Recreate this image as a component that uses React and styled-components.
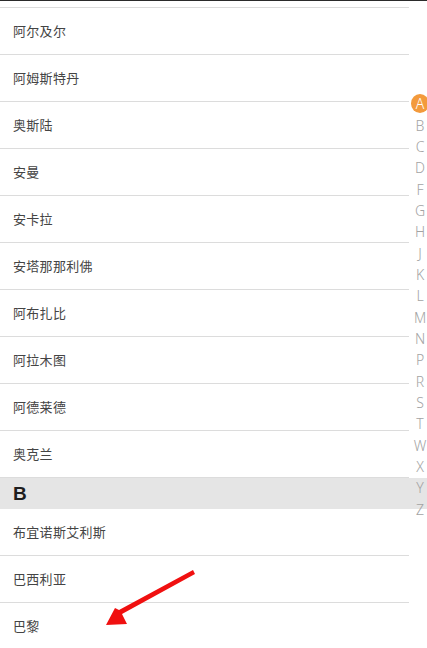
import React from "react";
import styled, { createGlobalStyle } from "styled-components";

const GlobalStyle = createGlobalStyle`
  html, body {
    margin: 0;
    padding: 0;
    background: #fff;
  }
  body {
    font-family: "Noto Sans CJK SC", "Liberation Sans", sans-serif;
  }
`;

const Page = styled.div`
  position: relative;
  width: 427px;
  height: 648px;
  overflow: hidden;
  background: #fff;
  border-top: 1px solid #2b2b2b;
  box-sizing: border-box;
`;

const List = styled.div`
  display: flex;
  flex-direction: column;
`;

const TopGap = styled.div`
  height: 6px;
  width: 409px;
  border-bottom: 1px solid #dcdcdc;
`;

const Row = styled.div`
  display: flex;
  align-items: center;
  height: 46px;
  width: 396px;
  padding-left: 13px;
  border-bottom: 1px solid #dcdcdc;
  font-size: 13px;
  color: #444;
  letter-spacing: 0.3px;
`;

const RowInner = styled.span`
  margin-top: ${(p) => p.$shift || 0}px;
`;

const SectionHead = styled.div`
  display: flex;
  align-items: center;
  height: 31px;
  padding-left: 13px;
  background: #e5e5e5;
  font-family: "Liberation Sans", "Noto Sans", sans-serif;
  font-weight: bold;
  font-size: 19px;
  color: #1e1e1e;
`;

const IndexBar = styled.div`
  position: absolute;
  top: 92px;
  right: -2px;
  width: 18px;
  display: flex;
  flex-direction: column;
  align-items: center;
  font-family: "Noto Sans", "Liberation Sans", sans-serif;
  font-weight: 300;
  font-size: 14px;
  color: #a3a3a3;
`;

const IndexLetter = styled.div`
  height: 21.35px;
  width: 18px;
  display: flex;
  align-items: center;
  justify-content: center;
`;

const ActiveDot = styled.div`
  width: 19px;
  height: 19px;
  border-radius: 50%;
  background: #f39a3c;
  color: #fff;
  display: flex;
  align-items: center;
  justify-content: center;
  font-size: 14px;
`;

const ArrowLayer = styled.svg`
  position: absolute;
  left: 0;
  top: 0;
  pointer-events: none;
`;

const groupA = [
  "阿尔及尔",
  "阿姆斯特丹",
  "奥斯陆",
  "安曼",
  "安卡拉",
  "安塔那那利佛",
  "阿布扎比",
  "阿拉木图",
  "阿德莱德",
  "奥克兰",
];

const groupB = ["布宜诺斯艾利斯", "巴西利亚", "巴黎"];

const letters = "ABCDFGHJKLMNPRSTWXYZ".split("");

const App = () => {
  return (
    <>
      <GlobalStyle />
      <Page>
        <List>
          <TopGap />
          {groupA.map((name) => (
            <Row key={name}>
              <RowInner $shift={-2}>{name}</RowInner>
            </Row>
          ))}
          <SectionHead>B</SectionHead>
          {groupB.map((name) => (
            <Row key={name}>
              <RowInner $shift={-2}>{name}</RowInner>
            </Row>
          ))}
        </List>

        <IndexBar>
          {letters.map((l, i) => (
            <IndexLetter key={l}>
              {i === 0 ? <ActiveDot>{l}</ActiveDot> : l}
            </IndexLetter>
          ))}
        </IndexBar>

        {/* red pointer arrow drawn over the list */}
        <ArrowLayer width="427" height="648" viewBox="0 0 427 648">
          <polygon
            points="193,569 195,573 122,613 127,623 106,624 115,607 119,609"
            fill="#f01010"
          />
        </ArrowLayer>
      </Page>
    </>
  );
};

export default App;
